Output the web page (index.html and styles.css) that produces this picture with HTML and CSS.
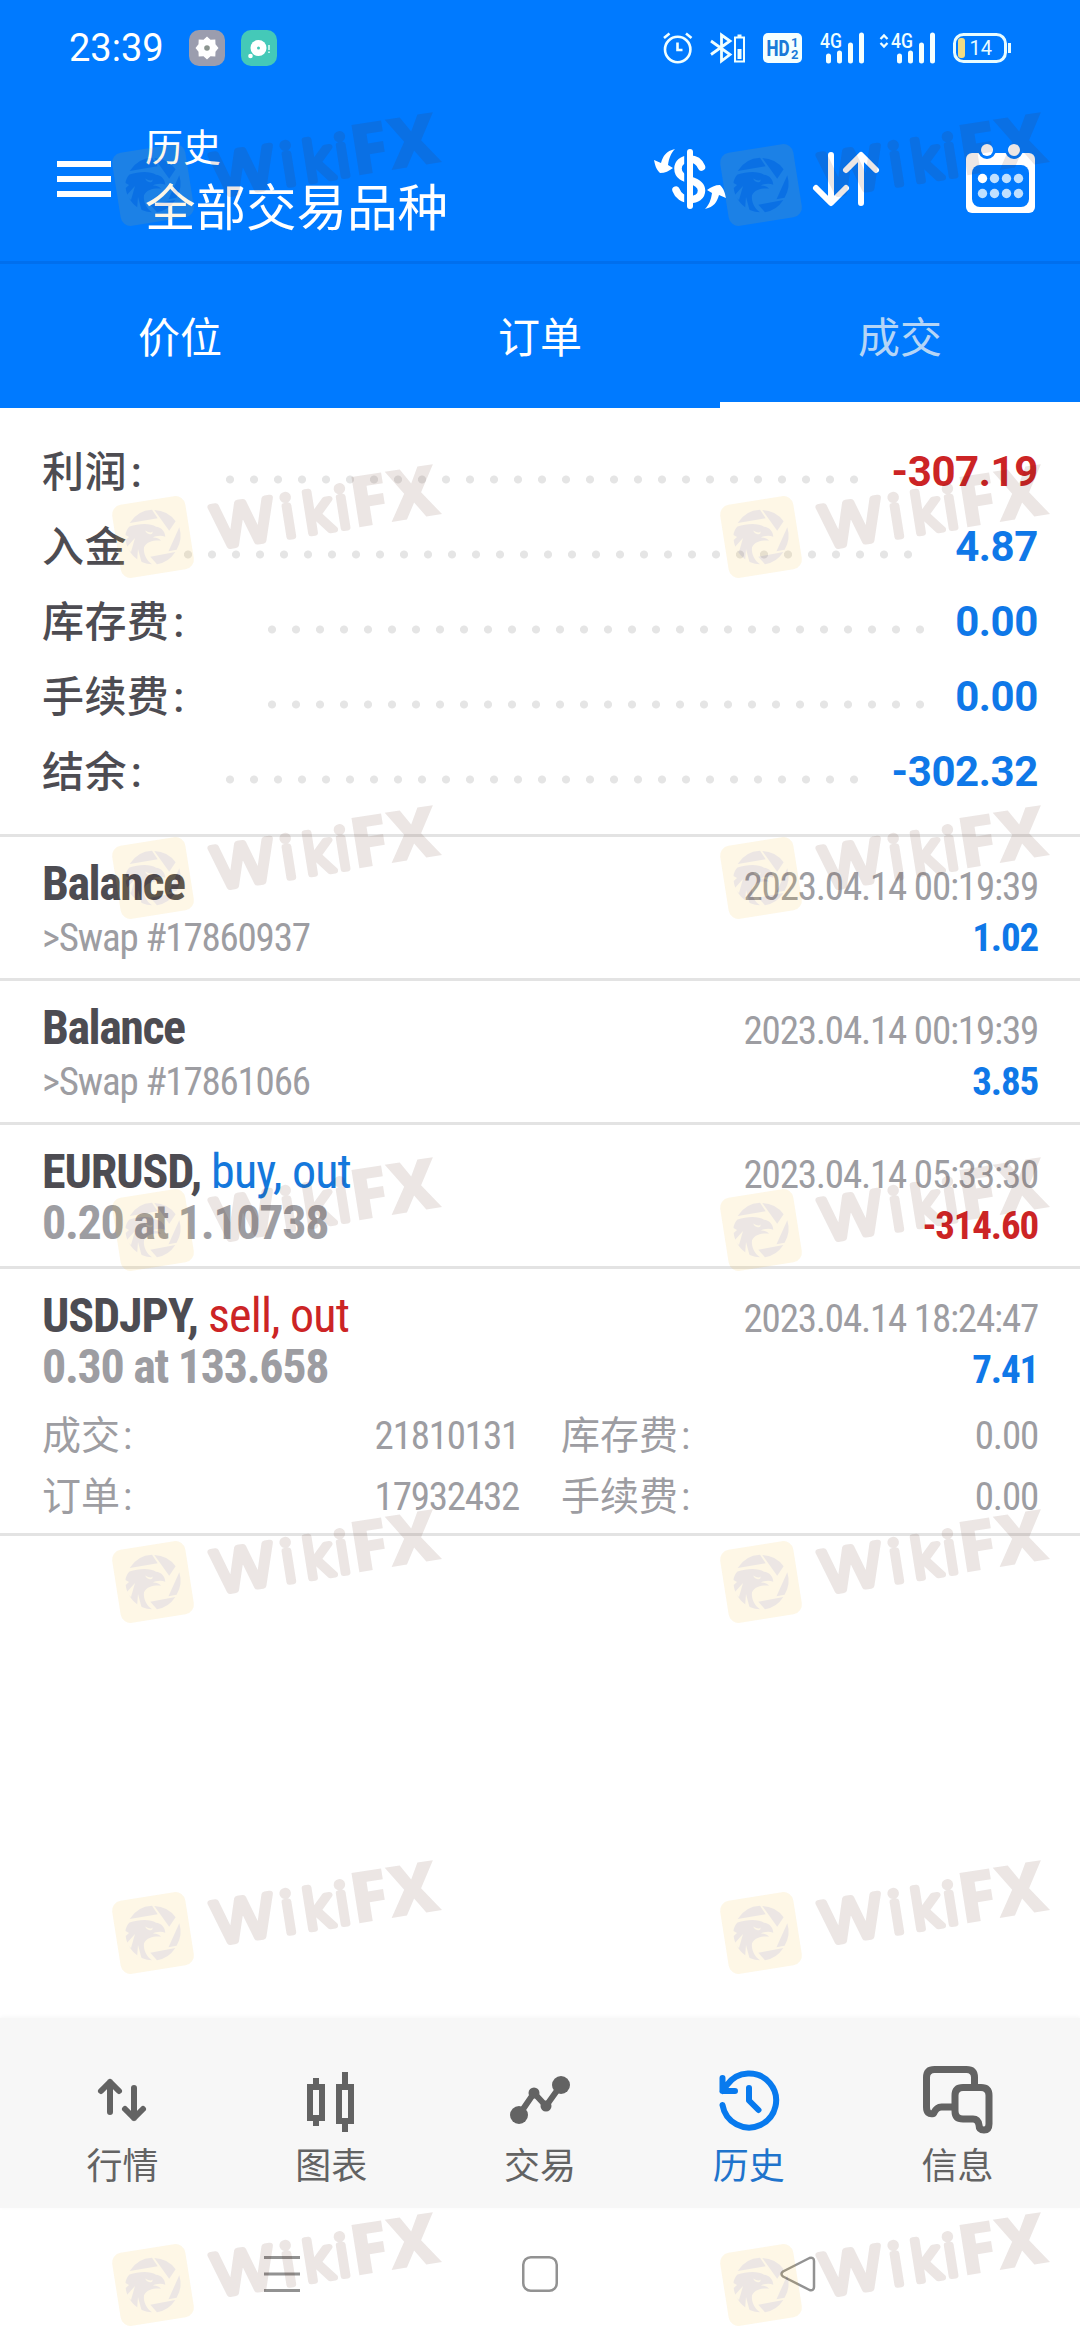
FILE: index.html
```html
<!DOCTYPE html>
<html lang="zh-CN">
<head>
    <meta charset="UTF-8">
    <meta name="viewport" content="width=device-width, initial-scale=1.0">
    <title>历史</title>
    <link rel="stylesheet" href="styles.css">
</head>
<body>
    <div class="screen">
        <header class="header">
            <div class="status-bar">
                <span class="time">23:39</span>
                <svg class="app-badge" width="36" height="36" viewBox="0 0 36 36">
                    <rect width="36" height="36" rx="10" fill="#9b9dae"/>
                    <path d="M18 6.500l3.500 3.300 4.800-.2.2 4.700L29.500 18l-3 3.700-.2 4.700-4.800-.2L18 29.500l-3.500-3.300-4.800.2-.2-4.700L6.500 18l3-3.700.2-4.700 4.800.2z" fill="#fff"/>
                    <circle cx="18" cy="18" r="2.800" fill="#8b958f"/>
                </svg>
                <svg class="app-badge" width="36" height="36" viewBox="0 0 36 36">
                    <rect width="36" height="36" rx="10" fill="#44c9b8"/>
                    <circle cx="17.500" cy="18" r="8" fill="#fff"/>
                    <circle cx="17.500" cy="18" r="1.500" fill="#44c9b8"/>
                    <circle cx="9.500" cy="26" r="2.300" fill="#fff"/>
                    <path d="M28 15v5M28 21.500v1.500" stroke="#c9f5ee" stroke-width="1.800"/>
                </svg>
                <div class="status-icons">
                    <svg class="alarm" width="30" height="32" viewBox="0 0 30 32" fill="none" stroke="#f0ffff" stroke-width="2.600">
                        <circle cx="14.700" cy="17.500" r="12.700"/>
                        <path d="M14.500 10.500v7.500h5M1 6l5.500-4.500M28.500 6L23 1.500"/>
                    </svg>
                    <svg class="bluetooth" width="36" height="32" viewBox="0 0 36 32" fill="none" stroke="#f0ffff" stroke-width="2.800">
                        <path d="M1 9l19 13.500-8.500 6.500V3L20 9 1 22.500"/>
                        <path d="M25 5.500h9v24h-9zM27.500 3.500h4" stroke-width="2"/>
                        <path d="M29.500 17v10" stroke-width="4"/>
                    </svg>
                    <svg class="hd" width="40" height="32" viewBox="0 0 40 32">
                        <rect y="1" width="39" height="30" rx="5" fill="#f4ffff"/>
                        <text x="3.500" y="24" class="hd-text" textLength="23" lengthAdjust="spacingAndGlyphs">HD</text>
                        <text x="28" y="15" class="hd-num">1</text>
                        <text x="28" y="27" class="hd-num">2</text>
                    </svg>
                    <svg class="signal" width="45" height="32" viewBox="0 0 45 32">
                        <text x="0" y="15.500" class="net-text" textLength="22" lengthAdjust="spacingAndGlyphs">4G</text>
                        <path d="M8.500 24v5M19.500 21v8M30.500 13v16M41.500 3v26" stroke="#f4ffff" stroke-width="5" stroke-linecap="round"/>
                    </svg>
                    <svg class="signal-data" width="57" height="32" viewBox="0 0 57 32">
                        <path d="M1.500 7L5 3.500 8.500 7M1.500 11L5 14.500 8.500 11" fill="none" stroke="#f0ffff" stroke-width="2.300"/>
                        <text x="12" y="15.500" class="net-text" textLength="22" lengthAdjust="spacingAndGlyphs">4G</text>
                        <path d="M20.500 24v5M31.500 21v8M42.500 13v16M53.500 3v26" stroke="#f4ffff" stroke-width="5" stroke-linecap="round"/>
                    </svg>
                    <svg class="battery" width="59" height="32" viewBox="0 0 59 32">
                        <rect x="1.500" y="2.500" width="51" height="27" rx="9" fill="none" stroke="#e8fcff" stroke-width="3"/>
                        <rect x="5" y="6" width="7" height="20" rx="3" fill="#f2dc83"/>
                        <path d="M56.500 11v10" stroke="#e8fcff" stroke-width="3"/>
                        <text x="16.500" y="23" class="battery-text">14</text>
                    </svg>
                </div>
            </div>
            <div class="app-bar">
                <svg width="54" height="36" viewBox="0 0 54 36">
                    <path d="M0 3h54M0 18h54M0 33h54" stroke="#fff" stroke-width="6"/>
                </svg>
                <div class="titles">
                    <div class="title-small">历史</div>
                    <div class="title-main">全部交易品种</div>
                </div>
                <svg class="icon-currency" width="72" height="60" viewBox="0 0 72 60">
                    <path d="M47.500 18C45 12 41 10 36 10c-8 0-12 4.500-12 9.500C24 27 30 29 36 31c8 2.500 11.500 5.500 11.500 10.500 0 6-5 9-11.500 9-7 0-12-4-14-9.500" fill="none" stroke="#fff" stroke-width="7.500" stroke-linecap="round"/>
                    <rect x="30.200" y="0" width="4" height="60" fill="#007aff"/>
                    <rect x="33" y="0" width="6" height="60" rx="3" fill="#fff"/>
                    <path id="swap" d="M21 0C12 2 9 7 7 14L0 11c1 5 2 9 6 13 5 0 9-2 13-5l-5-3C15 9 17 4 21 0z" fill="#fff"/>
                    <use href="#swap" transform="rotate(180 36 30)"/>
                </svg>
                <svg class="icon-sort" width="66" height="54" viewBox="0 0 66 54" fill="none" stroke="#fff" stroke-width="6" stroke-linecap="round" stroke-linejoin="round">
                    <path d="M18 3v47M3 36l15 15 15-15M48 51V4M33 18L48 3l15 15"/>
                </svg>
                <svg class="icon-calendar" width="70" height="70" viewBox="0 0 70 70">
                    <rect x="0" y="9" width="69" height="60" rx="6" fill="#fff"/>
                    <rect x="6" y="21" width="57" height="42" rx="8" fill="#007aff"/>
                    <path d="M12 6a9 9 0 0 0 18 0M39 6a9 9 0 0 0 18 0" fill="#007aff"/>
                    <circle cx="21" cy="6" r="6" fill="#fff"/>
                    <circle cx="48" cy="6" r="6" fill="#fff"/>
                    <g fill="#bfe0ff">
                        <circle cx="16.500" cy="34.500" r="4.700" fill="#fff"/>
                        <circle cx="28.500" cy="34.500" r="4.700"/>
                        <circle cx="40.500" cy="34.500" r="4.700"/>
                        <circle cx="52.500" cy="34.500" r="4.700"/>
                        <circle cx="16.500" cy="49.500" r="4.700"/>
                        <circle cx="28.500" cy="49.500" r="4.700"/>
                        <circle cx="40.500" cy="49.500" r="4.700"/>
                        <circle cx="52.500" cy="49.500" r="4.700"/>
                    </g>
                </svg>
            </div>
            <nav class="tabs">
                <div class="tab">价位</div>
                <div class="tab">订单</div>
                <div class="tab active">成交</div>
            </nav>
        </header>

        <section class="summary">
            <div class="summary-row">
                <span class="label">利润<span class="colon">:</span></span>
                <span class="dots"></span>
                <span class="value red">-307.19</span>
            </div>
            <div class="summary-row deposit">
                <span class="label">入金</span>
                <span class="dots"></span>
                <span class="value">4.87</span>
            </div>
            <div class="summary-row fee">
                <span class="label">库存费<span class="colon">:</span></span>
                <span class="dots"></span>
                <span class="value">0.00</span>
            </div>
            <div class="summary-row fee">
                <span class="label">手续费<span class="colon">:</span></span>
                <span class="dots"></span>
                <span class="value">0.00</span>
            </div>
            <div class="summary-row">
                <span class="label">结余<span class="colon">:</span></span>
                <span class="dots"></span>
                <span class="value">-302.32</span>
            </div>
        </section>

        <section class="deals">
            <div class="deal">
                <div class="line">
                    <span class="name">Balance</span>
                    <span class="date">2023.04.14 00:19:39</span>
                </div>
                <div class="line">
                    <span class="comment">&gt;Swap #17860937</span>
                    <span class="profit">1.02</span>
                </div>
            </div>
            <div class="deal">
                <div class="line">
                    <span class="name">Balance</span>
                    <span class="date">2023.04.14 00:19:39</span>
                </div>
                <div class="line">
                    <span class="comment">&gt;Swap #17861066</span>
                    <span class="profit">3.85</span>
                </div>
            </div>
            <div class="deal">
                <div class="line">
                    <span class="name symbol">EURUSD, <span class="side buy">buy, out</span></span>
                    <span class="date">2023.04.14 05:33:30</span>
                </div>
                <div class="line">
                    <span class="volume">0.20 at 1.10738</span>
                    <span class="profit red">-314.60</span>
                </div>
            </div>
            <div class="deal open">
                <div class="line">
                    <span class="name symbol">USDJPY, <span class="side red">sell, out</span></span>
                    <span class="date">2023.04.14 18:24:47</span>
                </div>
                <div class="line">
                    <span class="volume">0.30 at 133.658</span>
                    <span class="profit">7.41</span>
                </div>
                <div class="details">
                    <div class="detail"><span>成交<span class="colon">:</span></span><span class="num">21810131</span></div>
                    <div class="detail"><span>库存费<span class="colon">:</span></span><span class="num">0.00</span></div>
                    <div class="detail"><span>订单<span class="colon">:</span></span><span class="num">17932432</span></div>
                    <div class="detail"><span>手续费<span class="colon">:</span></span><span class="num">0.00</span></div>
                </div>
            </div>
        </section>

        <nav class="bottom-bar">
            <div class="nav-item">
                <svg width="72" height="72" viewBox="0 0 72 72" fill="none" stroke="#636363" stroke-width="6" stroke-linecap="round" stroke-linejoin="round">
                    <path d="M24 48V18M15 27l9-9 9 9M48 24v30M39 45l9 9 9-9"/>
                </svg>
                <span>行情</span>
            </div>
            <div class="nav-item">
                <svg width="72" height="72" viewBox="0 0 72 72" fill="none" stroke="#636363" stroke-width="6">
                    <path d="M15 23h12v31H15zM44 23h12v34H44zM21 14v6M21 57v5M50 8v12M50 60v8"/>
                </svg>
                <span>图表</span>
            </div>
            <div class="nav-item">
                <svg width="72" height="72" viewBox="0 0 72 72" fill="#636363">
                    <path d="M15 51l15-22 12 13 15-21" fill="none" stroke="#636363" stroke-width="6"/>
                    <circle cx="15" cy="51" r="9"/>
                    <circle cx="57" cy="21" r="9"/>
                    <circle cx="30" cy="29" r="5.500"/>
                    <circle cx="42" cy="42" r="5.500"/>
                </svg>
                <span>交易</span>
            </div>
            <div class="nav-item current">
                <svg width="72" height="72" viewBox="0 0 72 72" fill="none" stroke="#087aee" stroke-width="6" stroke-linecap="round" stroke-linejoin="round">
                    <path d="M9.500 41a27 27 0 1 0 4.500-20L9.500 27M9.500 14v13h12.500M36 24v12.500l9.500 9.500"/>
                </svg>
                <span>历史</span>
            </div>
            <div class="nav-item">
                <svg width="72" height="72" viewBox="0 0 72 72" fill="none" stroke="#636363" stroke-width="7" stroke-linejoin="round">
                    <path d="M52.500 21V13.500q0-8-8-8H12.500q-8 0-8 8V43q0 8 7 6.500 3-6.500 8-6.500H32"/>
                    <path d="M41 23.500h18q8 0 8 8V60q0 6-5 6t-5-5q-1-6-6-6H41q-8 0-8-8V31.500q0-8 8-8z"/>
                </svg>
                <span>信息</span>
            </div>
        </nav>

        <div class="system-nav">
            <svg width="36" height="36" viewBox="0 0 36 36">
                <path d="M0 1.500h36M0 18h36M0 34.500h36" stroke="#929292" stroke-width="3"/>
            </svg>
            <svg width="36" height="36" viewBox="0 0 36 36" fill="none" stroke="#929292" stroke-width="2.500">
                <rect x="1.250" y="1.250" width="33.500" height="33.500" rx="7.500"/>
            </svg>
            <svg width="36" height="36" viewBox="0 0 36 36" fill="none" stroke="#929292" stroke-width="2.500" stroke-linejoin="round">
                <path d="M3 15.500L29.500 2q4.500-1 4.500 3v26q0 4-4.500 3L3 20.500q-3-2.500 0-5z"/>
            </svg>
        </div>

        <svg class="watermark" width="1080" height="2340" viewBox="0 0 1080 2340">
            <defs>
                <g id="mark">
                    <rect x="-37" y="-37" width="74" height="74" rx="10" fill="#f0b828" transform="rotate(-9)"/>
                    <g fill="#582819">
                        <path d="M-23.300-14L4.700-18.700-1-27.300A27.500 27.500 0 0 0-23.300-14z"/>
                        <path d="M1.300-27L16.200-6.300 22.600-15.700A27.500 27.500 0 0 0 1.300-27z"/>
                        <path d="M26.300-9.700L15.500 14.300l8.100-1.600A27.500 27.500 0 0 0 26.300-9.700z"/>
                        <path d="M-2.700 19.700L22.300 15A27.500 27.500 0 0 1 4 27.300z"/>
                        <path d="M-23.500-10.500C-14-14-2-14 3-10.300 8-10 12-6 12.300-.3 8-2 2-1 0 .5 4 .5 7 2 8 3.700 2 3-6 4-9 10.300-10 17-6 24-1 27.300C-14 27-26 16-27.300 3L-24 0-27.500-2Q-27-7-23.500-10.500z"/>
                    </g>
                    <path d="M-8-6.500Q-2-3-.5-5.500 0-2-4-3-7-4-8-6.500zM-27 11L-18 1-22 15zM-16 25L-15 12-11 27z" fill="#f0b828"/>
                    <g transform="rotate(-9)" fill="#582819">
                        <text x="60" y="21" class="mark-wiki" textLength="63" lengthAdjust="spacingAndGlyphs">W</text>
                        <text x="130 152 185" y="21" class="mark-wiki">iki</text>
                        <text x="200 238" y="22.500" class="mark-fx">FX</text>
                    </g>
                </g>
            </defs>
            <g opacity="0.115">
                <use href="#mark" x="153" y="185"/>
                <use href="#mark" x="761" y="185"/>
                <use href="#mark" x="153" y="537"/>
                <use href="#mark" x="761" y="537"/>
                <use href="#mark" x="153" y="878"/>
                <use href="#mark" x="761" y="878"/>
                <use href="#mark" x="153" y="1230"/>
                <use href="#mark" x="761" y="1230"/>
                <use href="#mark" x="153" y="1582"/>
                <use href="#mark" x="761" y="1582"/>
                <use href="#mark" x="153" y="1933"/>
                <use href="#mark" x="761" y="1933"/>
                <use href="#mark" x="153" y="2285"/>
                <use href="#mark" x="761" y="2285"/>
            </g>
        </svg>
    </div>
</body>
</html>
```
FILE: styles.css
```css
body {
    margin: 0;
    background: #fff;
    color: #4d4c52;
    font-family: Roboto, "Noto Sans CJK SC", sans-serif;
}
svg {
    display: block;
    flex: none;
    overflow: visible;
}
.screen {
    position: relative;
    display: flex;
    flex-direction: column;
    width: 1080px;
    height: 2340px;
    overflow: hidden;
}
.header {
    background: #007aff;
    color: #fff;
}

/* status bar */
.status-bar {
    display: flex;
    align-items: center;
    height: 96px;
    padding: 0 68px 0 69px;
}
.time {
    width: 120px;
    font-size: 38px;
    white-space: nowrap;
}
.app-badge {
    margin-right: 16px;
}
.status-icons {
    display: flex;
    align-items: center;
    margin-left: auto;
}
.bluetooth,
.hd,
.signal,
.battery {
    margin-left: 17px;
}
.signal-data {
    margin-left: 14px;
}
.hd-text {
    font-size: 22px;
    font-weight: 800;
    fill: #1a7ad8;
}
.hd-num {
    font-size: 13px;
    font-weight: 700;
    fill: #1a7ad8;
}
.net-text {
    font-size: 19.5px;
    font-weight: 500;
    fill: #f0ffff;
}
.battery-text {
    font-size: 20px;
    fill: #e8fcff;
}

/* app bar */
.app-bar {
    display: flex;
    align-items: center;
    height: 165px;
    padding: 1px 44px 0 57px;
    box-sizing: border-box;
}
.titles {
    flex: 1;
    margin-left: 34px;
}
.title-small {
    font-size: 38px;
    line-height: 60px;
}
.title-main {
    font-size: 50.5px;
    line-height: 62px;
}
.icon-sort {
    margin-left: 87px;
}
.icon-calendar {
    margin-left: 87px;
}

/* tabs */
.tabs {
    display: flex;
    height: 144px;
    border-top: 3px solid #006fee;
}
.tab {
    flex: 1;
    box-sizing: border-box;
    padding-top: 4px;
    font-size: 42px;
    line-height: 142px;
    text-align: center;
}
.tab.active {
    border-bottom: 6px solid #fff;
    color: #b5d5f6;
}

/* totals */
.summary {
    padding: 26px 42px 25px;
    border-bottom: 3px solid #e3e3e3;
}
.summary-row {
    display: flex;
    height: 75px;
    font-size: 42px;
    line-height: 75px;
}
.label {
    width: 176px;
    font-weight: 500;
    line-height: 77px;
    letter-spacing: 0.4px;
    white-space: nowrap;
}
.colon {
    margin-left: 4px;
}
.dots {
    width: 648px;
    background: radial-gradient(circle at 12px 45.5px, #e5e5e5 3.6px, transparent 4.4px) 0 0 / 24px 75px repeat-x;
}
.value {
    flex: 1;
    color: #0f78e8;
    font-weight: 700;
    letter-spacing: -0.4px;
    text-align: right;
}
.red {
    color: #cc2425;
}
.deposit .label {
    width: 134px;
}
.deposit .dots {
    width: 744px;
}
.fee .label {
    width: 218px;
}
.fee .dots {
    width: 672px;
}

/* deals */
.deals {
    flex: 1;
    font-stretch: 75%;
    font-family: "Roboto Condensed", Roboto, "Noto Sans CJK SC", sans-serif;
}
.deal {
    padding: 21px 42px 18px;
    border-bottom: 3px solid #e3e3e3;
}
.deal.open {
    padding-bottom: 5px;
}
.line {
    display: flex;
    justify-content: space-between;
    align-items: baseline;
    height: 51px;
    white-space: nowrap;
}
.name,
.volume {
    font-size: 48px;
    font-weight: 700;
    line-height: 51px;
    letter-spacing: -1.5px;
}
.name.symbol {
    letter-spacing: -1.1px;
}
.volume {
    color: #9d9da2;
    letter-spacing: -1.3px;
}
.side {
    font-weight: 400;
    letter-spacing: -0.8px;
}
.buy {
    color: #1478dc;
}
.date,
.comment,
.profit {
    color: #9d9da2;
    font-size: 39px;
    line-height: 57px;
    letter-spacing: -1.2px;
}
.comment {
    line-height: 59px;
}
.profit {
    color: #0f78e8;
    font-weight: 700;
}
.profit.red {
    color: #cc2425;
}
.details {
    display: grid;
    grid-template-columns: 1fr 1fr;
    column-gap: 42px;
    margin-top: 14px;
    color: #9d9da2;
    font-size: 39px;
    line-height: 61px;
}
.detail {
    display: flex;
    justify-content: space-between;
}
.detail .colon {
    margin-left: 3px;
}
.num {
    letter-spacing: -1.2px;
}

/* bottom navigation */
.bottom-bar {
    display: flex;
    box-sizing: border-box;
    height: 190px;
    padding: 46px 18px 0;
    background: #f7f7f7;
    box-shadow: 0 -1px 4px rgba(0,0,0,0.04);
}
.nav-item {
    flex: 1;
    display: flex;
    flex-direction: column;
    align-items: center;
    gap: 10px;
    color: #636363;
    font-size: 36px;
    line-height: 42px;
}
.nav-item.current {
    color: #1f74cc;
}
.system-nav {
    display: flex;
    align-items: center;
    justify-content: space-between;
    box-sizing: border-box;
    height: 132px;
    padding: 0 264px;
}

/* watermark */
.watermark {
    position: absolute;
    top: 0;
    left: 0;
    pointer-events: none;
}
.mark-wiki {
    font-family: Inter, sans-serif;
    font-size: 57px;
    font-weight: 300;
    stroke: #582819;
    stroke-width: 6px;
    stroke-linejoin: round;
}
.mark-fx {
    font-family: "Open Sans", sans-serif;
    font-size: 71px;
    font-weight: 800;
}
```
